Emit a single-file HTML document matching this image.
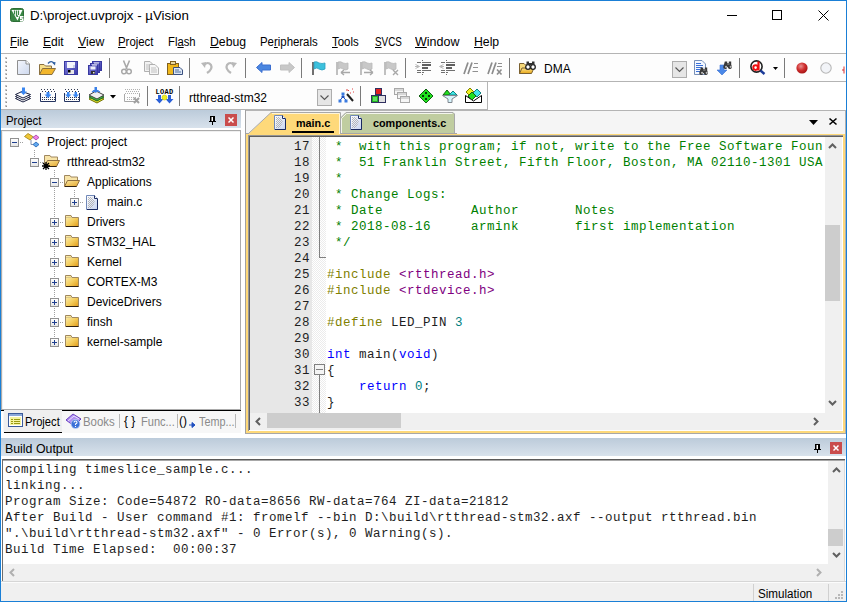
<!DOCTYPE html><html><head><meta charset="utf-8"><style>
*{margin:0;padding:0;box-sizing:border-box}
html,body{width:847px;height:602px;overflow:hidden;background:#fff}
body{position:relative;font-family:"Liberation Sans",sans-serif;font-size:12px;color:#000}
.ui{position:absolute;white-space:pre;font-family:"Liberation Sans",sans-serif;font-size:12px;line-height:14px;color:#000}
.mono{position:absolute;white-space:pre;font-family:"Liberation Mono",monospace;font-size:12.5px;letter-spacing:0.5px;line-height:16px;color:#1e1e1e}
u{text-decoration:underline;text-decoration-thickness:1px;text-underline-offset:1px}
svg{overflow:visible}
</style></head><body><svg style="position:absolute;left:10px;top:8px" width="14" height="14" viewBox="0 0 14 14"><rect x="0.5" y="0.5" width="13" height="13" rx="2" fill="#3a8745" stroke="#2c6e36"/><path d="M1.5 2H12.5L7.5 12.5Z" fill="#fff"/><path d="M4.5 2.5V6.5M6.5 2.5V8M8.5 2.5V7" stroke="#3a8745" stroke-width="1.2"/><path d="M6 9L7.5 7L8.5 9" fill="#3a8745"/><path d="M10 8h3.5v1.5h-2v0.8h2V13.5h-3.5v-1.5h2v-0.7h-2z" fill="#fff"/></svg>
<div class="ui" style="left:30px;top:8px;font-size:13.3px;line-height:16px">D:\project.uvprojx - µVision</div>
<div style="position:absolute;left:727px;top:15px;width:10px;height:1px;background:#000"></div>
<div style="position:absolute;left:772px;top:10px;width:10px;height:10px;border:1px solid #000"></div>
<svg style="position:absolute;left:818px;top:10px" width="11" height="11" viewBox="0 0 11 11"><path d="M0.5 0.5L10.5 10.5M10.5 0.5L0.5 10.5" stroke="#000" stroke-width="1"/></svg>
<div class="ui" style="left:10px;top:35px;font-size:12px;transform:scaleX(0.96);transform-origin:0 0"><u>F</u>ile</div>
<div class="ui" style="left:43px;top:35px;font-size:12px;transform:scaleX(1.0);transform-origin:0 0"><u>E</u>dit</div>
<div class="ui" style="left:78px;top:35px;font-size:12px;transform:scaleX(1.02);transform-origin:0 0"><u>V</u>iew</div>
<div class="ui" style="left:118px;top:35px;font-size:12px;transform:scaleX(0.95);transform-origin:0 0"><u>P</u>roject</div>
<div class="ui" style="left:168px;top:35px;font-size:12px;transform:scaleX(0.94);transform-origin:0 0">Fl<u>a</u>sh</div>
<div class="ui" style="left:210px;top:35px;font-size:12px;transform:scaleX(1.02);transform-origin:0 0"><u>D</u>ebug</div>
<div class="ui" style="left:260px;top:35px;font-size:12px;transform:scaleX(0.95);transform-origin:0 0">Pe<u>r</u>ipherals</div>
<div class="ui" style="left:332px;top:35px;font-size:12px;transform:scaleX(0.95);transform-origin:0 0"><u>T</u>ools</div>
<div class="ui" style="left:375px;top:35px;font-size:12px;transform:scaleX(0.82);transform-origin:0 0"><u>S</u>VCS</div>
<div class="ui" style="left:415px;top:35px;font-size:12px;transform:scaleX(1.04);transform-origin:0 0"><u>W</u>indow</div>
<div class="ui" style="left:474px;top:35px;font-size:12px;transform:scaleX(1.02);transform-origin:0 0"><u>H</u>elp</div>
<div style="position:absolute;left:1px;top:53px;width:845px;height:1px;background:#b4b4b4"></div>
<div style="position:absolute;left:1px;top:54px;width:845px;height:27px;background:#fdfdfd"></div>
<div style="position:absolute;left:1px;top:81px;width:845px;height:1px;background:#b4b4b4"></div>
<div style="position:absolute;left:5px;top:57px;width:2px;height:2px;background:#c4c4c4"></div>
<div style="position:absolute;left:6px;top:58px;width:1px;height:1px;background:#909090"></div>
<div style="position:absolute;left:5px;top:61px;width:2px;height:2px;background:#c4c4c4"></div>
<div style="position:absolute;left:6px;top:62px;width:1px;height:1px;background:#909090"></div>
<div style="position:absolute;left:5px;top:65px;width:2px;height:2px;background:#c4c4c4"></div>
<div style="position:absolute;left:6px;top:66px;width:1px;height:1px;background:#909090"></div>
<div style="position:absolute;left:5px;top:69px;width:2px;height:2px;background:#c4c4c4"></div>
<div style="position:absolute;left:6px;top:70px;width:1px;height:1px;background:#909090"></div>
<div style="position:absolute;left:5px;top:73px;width:2px;height:2px;background:#c4c4c4"></div>
<div style="position:absolute;left:6px;top:74px;width:1px;height:1px;background:#909090"></div>
<div style="position:absolute;left:5px;top:77px;width:2px;height:2px;background:#c4c4c4"></div>
<div style="position:absolute;left:6px;top:78px;width:1px;height:1px;background:#909090"></div>
<div style="position:absolute;left:109px;top:58px;width:1px;height:20px;background:#7a7a7a"></div>
<div style="position:absolute;left:189px;top:58px;width:1px;height:20px;background:#7a7a7a"></div>
<div style="position:absolute;left:245px;top:58px;width:1px;height:20px;background:#7a7a7a"></div>
<div style="position:absolute;left:301px;top:58px;width:1px;height:20px;background:#7a7a7a"></div>
<div style="position:absolute;left:405px;top:58px;width:1px;height:20px;background:#7a7a7a"></div>
<div style="position:absolute;left:509px;top:58px;width:1px;height:20px;background:#7a7a7a"></div>
<div style="position:absolute;left:739px;top:58px;width:1px;height:20px;background:#7a7a7a"></div>
<div style="position:absolute;left:784px;top:58px;width:1px;height:20px;background:#7a7a7a"></div>
<div style="position:absolute;left:1px;top:82px;width:486px;height:27px;background:#fdfdfd"></div>
<div style="position:absolute;left:487px;top:82px;width:1px;height:28px;background:#b4b4b4"></div>
<div style="position:absolute;left:1px;top:109px;width:487px;height:1px;background:#b4b4b4"></div>
<div style="position:absolute;left:5px;top:85px;width:2px;height:2px;background:#c4c4c4"></div>
<div style="position:absolute;left:6px;top:86px;width:1px;height:1px;background:#909090"></div>
<div style="position:absolute;left:5px;top:89px;width:2px;height:2px;background:#c4c4c4"></div>
<div style="position:absolute;left:6px;top:90px;width:1px;height:1px;background:#909090"></div>
<div style="position:absolute;left:5px;top:93px;width:2px;height:2px;background:#c4c4c4"></div>
<div style="position:absolute;left:6px;top:94px;width:1px;height:1px;background:#909090"></div>
<div style="position:absolute;left:5px;top:97px;width:2px;height:2px;background:#c4c4c4"></div>
<div style="position:absolute;left:6px;top:98px;width:1px;height:1px;background:#909090"></div>
<div style="position:absolute;left:5px;top:101px;width:2px;height:2px;background:#c4c4c4"></div>
<div style="position:absolute;left:6px;top:102px;width:1px;height:1px;background:#909090"></div>
<div style="position:absolute;left:5px;top:105px;width:2px;height:2px;background:#c4c4c4"></div>
<div style="position:absolute;left:6px;top:106px;width:1px;height:1px;background:#909090"></div>
<div style="position:absolute;left:147px;top:86px;width:1px;height:20px;background:#7a7a7a"></div>
<div style="position:absolute;left:179px;top:86px;width:1px;height:20px;background:#7a7a7a"></div>
<div style="position:absolute;left:360px;top:86px;width:1px;height:20px;background:#7a7a7a"></div>
<div class="ui" style="left:189px;top:91px;">rtthread-stm32</div>
<div style="position:absolute;left:672px;top:61px;width:15px;height:17px;background:#e6e6e6;border:1px solid #adadad"></div>
<svg style="position:absolute;left:675px;top:67px" width="9" height="5" viewBox="0 0 9 5"><path d="M0.5 0.5L4.5 4.5L8.5 0.5" stroke="#555" fill="none" stroke-width="1.1"/></svg>
<div style="position:absolute;left:317px;top:89px;width:15px;height:17px;background:#e6e6e6;border:1px solid #adadad"></div>
<svg style="position:absolute;left:320px;top:95px" width="9" height="5" viewBox="0 0 9 5"><path d="M0.5 0.5L4.5 4.5L8.5 0.5" stroke="#555" fill="none" stroke-width="1.1"/></svg>
<div class="ui" style="left:544px;top:62px;font-size:12px">DMA</div>
<div style="position:absolute;left:1px;top:109px;width:240px;height:1px;background:#b4b4b4"></div>
<div style="position:absolute;left:1px;top:110px;width:240px;height:18px;background:linear-gradient(#bccbda,#d8e2ec)"></div>
<div class="ui" style="left:6px;top:114px;transform:scaleX(0.95);transform-origin:0 0">Project</div>
<svg style="position:absolute;left:209px;top:116px" width="8" height="10" viewBox="0 0 8 10"><path d="M1 0h5v5h1v1H0V5h1z" fill="#000"/><rect x="2.5" y="1" width="1.5" height="4" fill="#fff"/><rect x="3" y="6" width="1" height="3" fill="#000"/></svg>
<div style="position:absolute;left:225px;top:114px;width:12px;height:12px;background:#c94c4c"></div>
<svg style="position:absolute;left:228px;top:117px" width="6" height="6" viewBox="0 0 6 6"><path d="M0.5 0.5L5.5 5.5M5.5 0.5L0.5 5.5" stroke="#fff" stroke-width="1.5"/></svg>
<div style="position:absolute;left:1px;top:130px;width:240px;height:280px;border:1px solid #ababab;background:#fff"></div>
<div style="position:absolute;left:2px;top:131px;width:238px;height:278px;border:1px solid #f0f0f0;border-right:none;border-bottom:none"></div>
<div style="position:absolute;left:34px;top:150px;width:1px;height:1px;background:#a0a0a0"></div>
<div style="position:absolute;left:34px;top:152px;width:1px;height:1px;background:#a0a0a0"></div>
<div style="position:absolute;left:34px;top:154px;width:1px;height:1px;background:#a0a0a0"></div>
<div style="position:absolute;left:34px;top:156px;width:1px;height:1px;background:#a0a0a0"></div>
<div style="position:absolute;left:54px;top:170px;width:1px;height:1px;background:#a0a0a0"></div>
<div style="position:absolute;left:54px;top:172px;width:1px;height:1px;background:#a0a0a0"></div>
<div style="position:absolute;left:54px;top:174px;width:1px;height:1px;background:#a0a0a0"></div>
<div style="position:absolute;left:54px;top:176px;width:1px;height:1px;background:#a0a0a0"></div>
<div style="position:absolute;left:54px;top:178px;width:1px;height:1px;background:#a0a0a0"></div>
<div style="position:absolute;left:54px;top:180px;width:1px;height:1px;background:#a0a0a0"></div>
<div style="position:absolute;left:54px;top:182px;width:1px;height:1px;background:#a0a0a0"></div>
<div style="position:absolute;left:54px;top:184px;width:1px;height:1px;background:#a0a0a0"></div>
<div style="position:absolute;left:54px;top:186px;width:1px;height:1px;background:#a0a0a0"></div>
<div style="position:absolute;left:54px;top:188px;width:1px;height:1px;background:#a0a0a0"></div>
<div style="position:absolute;left:54px;top:190px;width:1px;height:1px;background:#a0a0a0"></div>
<div style="position:absolute;left:54px;top:192px;width:1px;height:1px;background:#a0a0a0"></div>
<div style="position:absolute;left:54px;top:194px;width:1px;height:1px;background:#a0a0a0"></div>
<div style="position:absolute;left:54px;top:196px;width:1px;height:1px;background:#a0a0a0"></div>
<div style="position:absolute;left:54px;top:198px;width:1px;height:1px;background:#a0a0a0"></div>
<div style="position:absolute;left:54px;top:200px;width:1px;height:1px;background:#a0a0a0"></div>
<div style="position:absolute;left:54px;top:202px;width:1px;height:1px;background:#a0a0a0"></div>
<div style="position:absolute;left:54px;top:204px;width:1px;height:1px;background:#a0a0a0"></div>
<div style="position:absolute;left:54px;top:206px;width:1px;height:1px;background:#a0a0a0"></div>
<div style="position:absolute;left:54px;top:208px;width:1px;height:1px;background:#a0a0a0"></div>
<div style="position:absolute;left:54px;top:210px;width:1px;height:1px;background:#a0a0a0"></div>
<div style="position:absolute;left:54px;top:212px;width:1px;height:1px;background:#a0a0a0"></div>
<div style="position:absolute;left:54px;top:214px;width:1px;height:1px;background:#a0a0a0"></div>
<div style="position:absolute;left:54px;top:216px;width:1px;height:1px;background:#a0a0a0"></div>
<div style="position:absolute;left:54px;top:218px;width:1px;height:1px;background:#a0a0a0"></div>
<div style="position:absolute;left:54px;top:220px;width:1px;height:1px;background:#a0a0a0"></div>
<div style="position:absolute;left:54px;top:222px;width:1px;height:1px;background:#a0a0a0"></div>
<div style="position:absolute;left:54px;top:224px;width:1px;height:1px;background:#a0a0a0"></div>
<div style="position:absolute;left:54px;top:226px;width:1px;height:1px;background:#a0a0a0"></div>
<div style="position:absolute;left:54px;top:228px;width:1px;height:1px;background:#a0a0a0"></div>
<div style="position:absolute;left:54px;top:230px;width:1px;height:1px;background:#a0a0a0"></div>
<div style="position:absolute;left:54px;top:232px;width:1px;height:1px;background:#a0a0a0"></div>
<div style="position:absolute;left:54px;top:234px;width:1px;height:1px;background:#a0a0a0"></div>
<div style="position:absolute;left:54px;top:236px;width:1px;height:1px;background:#a0a0a0"></div>
<div style="position:absolute;left:54px;top:238px;width:1px;height:1px;background:#a0a0a0"></div>
<div style="position:absolute;left:54px;top:240px;width:1px;height:1px;background:#a0a0a0"></div>
<div style="position:absolute;left:54px;top:242px;width:1px;height:1px;background:#a0a0a0"></div>
<div style="position:absolute;left:54px;top:244px;width:1px;height:1px;background:#a0a0a0"></div>
<div style="position:absolute;left:54px;top:246px;width:1px;height:1px;background:#a0a0a0"></div>
<div style="position:absolute;left:54px;top:248px;width:1px;height:1px;background:#a0a0a0"></div>
<div style="position:absolute;left:54px;top:250px;width:1px;height:1px;background:#a0a0a0"></div>
<div style="position:absolute;left:54px;top:252px;width:1px;height:1px;background:#a0a0a0"></div>
<div style="position:absolute;left:54px;top:254px;width:1px;height:1px;background:#a0a0a0"></div>
<div style="position:absolute;left:54px;top:256px;width:1px;height:1px;background:#a0a0a0"></div>
<div style="position:absolute;left:54px;top:258px;width:1px;height:1px;background:#a0a0a0"></div>
<div style="position:absolute;left:54px;top:260px;width:1px;height:1px;background:#a0a0a0"></div>
<div style="position:absolute;left:54px;top:262px;width:1px;height:1px;background:#a0a0a0"></div>
<div style="position:absolute;left:54px;top:264px;width:1px;height:1px;background:#a0a0a0"></div>
<div style="position:absolute;left:54px;top:266px;width:1px;height:1px;background:#a0a0a0"></div>
<div style="position:absolute;left:54px;top:268px;width:1px;height:1px;background:#a0a0a0"></div>
<div style="position:absolute;left:54px;top:270px;width:1px;height:1px;background:#a0a0a0"></div>
<div style="position:absolute;left:54px;top:272px;width:1px;height:1px;background:#a0a0a0"></div>
<div style="position:absolute;left:54px;top:274px;width:1px;height:1px;background:#a0a0a0"></div>
<div style="position:absolute;left:54px;top:276px;width:1px;height:1px;background:#a0a0a0"></div>
<div style="position:absolute;left:54px;top:278px;width:1px;height:1px;background:#a0a0a0"></div>
<div style="position:absolute;left:54px;top:280px;width:1px;height:1px;background:#a0a0a0"></div>
<div style="position:absolute;left:54px;top:282px;width:1px;height:1px;background:#a0a0a0"></div>
<div style="position:absolute;left:54px;top:284px;width:1px;height:1px;background:#a0a0a0"></div>
<div style="position:absolute;left:54px;top:286px;width:1px;height:1px;background:#a0a0a0"></div>
<div style="position:absolute;left:54px;top:288px;width:1px;height:1px;background:#a0a0a0"></div>
<div style="position:absolute;left:54px;top:290px;width:1px;height:1px;background:#a0a0a0"></div>
<div style="position:absolute;left:54px;top:292px;width:1px;height:1px;background:#a0a0a0"></div>
<div style="position:absolute;left:54px;top:294px;width:1px;height:1px;background:#a0a0a0"></div>
<div style="position:absolute;left:54px;top:296px;width:1px;height:1px;background:#a0a0a0"></div>
<div style="position:absolute;left:54px;top:298px;width:1px;height:1px;background:#a0a0a0"></div>
<div style="position:absolute;left:54px;top:300px;width:1px;height:1px;background:#a0a0a0"></div>
<div style="position:absolute;left:54px;top:302px;width:1px;height:1px;background:#a0a0a0"></div>
<div style="position:absolute;left:54px;top:304px;width:1px;height:1px;background:#a0a0a0"></div>
<div style="position:absolute;left:54px;top:306px;width:1px;height:1px;background:#a0a0a0"></div>
<div style="position:absolute;left:54px;top:308px;width:1px;height:1px;background:#a0a0a0"></div>
<div style="position:absolute;left:54px;top:310px;width:1px;height:1px;background:#a0a0a0"></div>
<div style="position:absolute;left:54px;top:312px;width:1px;height:1px;background:#a0a0a0"></div>
<div style="position:absolute;left:54px;top:314px;width:1px;height:1px;background:#a0a0a0"></div>
<div style="position:absolute;left:54px;top:316px;width:1px;height:1px;background:#a0a0a0"></div>
<div style="position:absolute;left:54px;top:318px;width:1px;height:1px;background:#a0a0a0"></div>
<div style="position:absolute;left:54px;top:320px;width:1px;height:1px;background:#a0a0a0"></div>
<div style="position:absolute;left:54px;top:322px;width:1px;height:1px;background:#a0a0a0"></div>
<div style="position:absolute;left:54px;top:324px;width:1px;height:1px;background:#a0a0a0"></div>
<div style="position:absolute;left:54px;top:326px;width:1px;height:1px;background:#a0a0a0"></div>
<div style="position:absolute;left:54px;top:328px;width:1px;height:1px;background:#a0a0a0"></div>
<div style="position:absolute;left:54px;top:330px;width:1px;height:1px;background:#a0a0a0"></div>
<div style="position:absolute;left:54px;top:332px;width:1px;height:1px;background:#a0a0a0"></div>
<div style="position:absolute;left:54px;top:334px;width:1px;height:1px;background:#a0a0a0"></div>
<div style="position:absolute;left:54px;top:336px;width:1px;height:1px;background:#a0a0a0"></div>
<div style="position:absolute;left:54px;top:338px;width:1px;height:1px;background:#a0a0a0"></div>
<div style="position:absolute;left:54px;top:340px;width:1px;height:1px;background:#a0a0a0"></div>
<div style="position:absolute;left:54px;top:342px;width:1px;height:1px;background:#a0a0a0"></div>
<div style="position:absolute;left:54px;top:344px;width:1px;height:1px;background:#a0a0a0"></div>
<div style="position:absolute;left:74px;top:190px;width:1px;height:1px;background:#a0a0a0"></div>
<div style="position:absolute;left:74px;top:192px;width:1px;height:1px;background:#a0a0a0"></div>
<div style="position:absolute;left:74px;top:194px;width:1px;height:1px;background:#a0a0a0"></div>
<div style="position:absolute;left:74px;top:196px;width:1px;height:1px;background:#a0a0a0"></div>
<div style="position:absolute;left:10px;top:138px;width:9px;height:9px;border:1px solid #919191;background:linear-gradient(#fff,#e6e6e6)"></div>
<div style="position:absolute;left:12px;top:142px;width:5px;height:1px;background:#1f3f8f"></div>
<div style="position:absolute;left:20px;top:142px;width:1px;height:1px;background:#a0a0a0"></div>
<div style="position:absolute;left:22px;top:142px;width:1px;height:1px;background:#a0a0a0"></div>
<svg style="position:absolute;left:24px;top:133px" width="16" height="16" viewBox="0 0 16 16"><path d="M0.5 3.5L4 0.5L9.5 4L6 7Z" fill="#f0c838" stroke="#a08010" stroke-width="0.8"/><path d="M9 4.5L12 2L15 4.5L12 7Z" fill="#f080e8" stroke="#a040a0" stroke-width="0.8"/><path d="M9 11.5L12 9L15 11.5L12 14Z" fill="#60a8f0" stroke="#2060b0" stroke-width="0.8"/><path d="M7 7V11.5H9M9 4.5H8" stroke="#8090b0" fill="none"/></svg>
<div class="ui" style="left:47px;top:135px;">Project: project</div>
<div style="position:absolute;left:30px;top:158px;width:9px;height:9px;border:1px solid #919191;background:linear-gradient(#fff,#e6e6e6)"></div>
<div style="position:absolute;left:32px;top:162px;width:5px;height:1px;background:#1f3f8f"></div>
<div style="position:absolute;left:40px;top:162px;width:1px;height:1px;background:#a0a0a0"></div>
<div style="position:absolute;left:42px;top:162px;width:1px;height:1px;background:#a0a0a0"></div>
<svg style="position:absolute;left:44px;top:154px" width="16" height="14" viewBox="0 0 16 14"><defs><linearGradient id="og" x1="0" y1="0" x2="1" y2="1"><stop offset="0" stop-color="#fbe8a0"/><stop offset="1" stop-color="#e3a52a"/></linearGradient></defs><path d="M0.5 12.5V1.5H6L7 3H13.5V6" fill="#f8e4a8" stroke="#a08860"/><path d="M3.5 6.5H15.5L12.5 12.5H0.5Z" fill="url(#og)" stroke="#907040"/><path d="M1 12.5H12.5" stroke="#302010"/></svg>
<svg style="position:absolute;left:42px;top:162px" width="8" height="8" viewBox="0 0 8 8"><path d="M4 0v8M0 4h8M1 1l6 6M7 1l-6 6" stroke="#000" stroke-width="1.3"/></svg>
<div class="ui" style="left:67px;top:155px;">rtthread-stm32</div>
<div style="position:absolute;left:50px;top:178px;width:9px;height:9px;border:1px solid #919191;background:linear-gradient(#fff,#e6e6e6)"></div>
<div style="position:absolute;left:52px;top:182px;width:5px;height:1px;background:#1f3f8f"></div>
<div style="position:absolute;left:60px;top:182px;width:1px;height:1px;background:#a0a0a0"></div>
<div style="position:absolute;left:62px;top:182px;width:1px;height:1px;background:#a0a0a0"></div>
<svg style="position:absolute;left:64px;top:174px" width="16" height="14" viewBox="0 0 16 14"><defs><linearGradient id="og" x1="0" y1="0" x2="1" y2="1"><stop offset="0" stop-color="#fbe8a0"/><stop offset="1" stop-color="#e3a52a"/></linearGradient></defs><path d="M0.5 12.5V1.5H6L7 3H13.5V6" fill="#f8e4a8" stroke="#a08860"/><path d="M3.5 6.5H15.5L12.5 12.5H0.5Z" fill="url(#og)" stroke="#907040"/><path d="M1 12.5H12.5" stroke="#302010"/></svg>
<div class="ui" style="left:87px;top:175px;">Applications</div>
<div style="position:absolute;left:70px;top:198px;width:9px;height:9px;border:1px solid #919191;background:linear-gradient(#fff,#e6e6e6)"></div>
<div style="position:absolute;left:72px;top:202px;width:5px;height:1px;background:#1f3f8f"></div>
<div style="position:absolute;left:74px;top:200px;width:1px;height:5px;background:#1f3f8f"></div>
<div style="position:absolute;left:80px;top:202px;width:1px;height:1px;background:#a0a0a0"></div>
<div style="position:absolute;left:82px;top:202px;width:1px;height:1px;background:#a0a0a0"></div>
<svg style="position:absolute;left:86px;top:195px" width="12" height="15" viewBox="0 0 12 15"><defs><linearGradient id="di" x1="0" y1="0" x2="1" y2="1"><stop offset="0" stop-color="#ffffff"/><stop offset="1" stop-color="#c8d4f0"/></linearGradient><pattern id="dp" width="2" height="2" patternUnits="userSpaceOnUse"><rect width="1" height="1" fill="#a8a8a8"/><rect x="1" y="1" width="1" height="1" fill="#a8a8a8"/></pattern></defs><path d="M0.5 0.5H8.5L11.5 3.5V14.5H0.5Z" fill="url(#di)" stroke="#7088b8"/><path d="M2 2H6L9 7L6 13H2Z" fill="url(#dp)" opacity="0.8"/><path d="M8.5 0.5V3.5H11.5" fill="#fff" stroke="#1a2a60"/><path d="M1 14.5H11.5V4" fill="none" stroke="#1a2a60"/></svg>
<div class="ui" style="left:107px;top:195px;">main.c</div>
<div style="position:absolute;left:50px;top:218px;width:9px;height:9px;border:1px solid #919191;background:linear-gradient(#fff,#e6e6e6)"></div>
<div style="position:absolute;left:52px;top:222px;width:5px;height:1px;background:#1f3f8f"></div>
<div style="position:absolute;left:54px;top:220px;width:1px;height:5px;background:#1f3f8f"></div>
<div style="position:absolute;left:60px;top:222px;width:1px;height:1px;background:#a0a0a0"></div>
<div style="position:absolute;left:62px;top:222px;width:1px;height:1px;background:#a0a0a0"></div>
<svg style="position:absolute;left:65px;top:215px" width="14" height="12" viewBox="0 0 14 12"><defs><linearGradient id="fg" x1="0" y1="0" x2="1" y2="1"><stop offset="0" stop-color="#fdf2b8"/><stop offset="0.55" stop-color="#f3cc5c"/><stop offset="1" stop-color="#e09a18"/></linearGradient></defs><path d="M0.5 11.5V0.5H6L7 2.5H13.5V11.5Z" fill="url(#fg)" stroke="#a08860"/><path d="M1 2.5H7" stroke="#d8c890"/><path d="M1 11.5H13.5" stroke="#302010"/></svg>
<div class="ui" style="left:87px;top:215px;">Drivers</div>
<div style="position:absolute;left:50px;top:238px;width:9px;height:9px;border:1px solid #919191;background:linear-gradient(#fff,#e6e6e6)"></div>
<div style="position:absolute;left:52px;top:242px;width:5px;height:1px;background:#1f3f8f"></div>
<div style="position:absolute;left:54px;top:240px;width:1px;height:5px;background:#1f3f8f"></div>
<div style="position:absolute;left:60px;top:242px;width:1px;height:1px;background:#a0a0a0"></div>
<div style="position:absolute;left:62px;top:242px;width:1px;height:1px;background:#a0a0a0"></div>
<svg style="position:absolute;left:65px;top:235px" width="14" height="12" viewBox="0 0 14 12"><defs><linearGradient id="fg" x1="0" y1="0" x2="1" y2="1"><stop offset="0" stop-color="#fdf2b8"/><stop offset="0.55" stop-color="#f3cc5c"/><stop offset="1" stop-color="#e09a18"/></linearGradient></defs><path d="M0.5 11.5V0.5H6L7 2.5H13.5V11.5Z" fill="url(#fg)" stroke="#a08860"/><path d="M1 2.5H7" stroke="#d8c890"/><path d="M1 11.5H13.5" stroke="#302010"/></svg>
<div class="ui" style="left:87px;top:235px;">STM32_HAL</div>
<div style="position:absolute;left:50px;top:258px;width:9px;height:9px;border:1px solid #919191;background:linear-gradient(#fff,#e6e6e6)"></div>
<div style="position:absolute;left:52px;top:262px;width:5px;height:1px;background:#1f3f8f"></div>
<div style="position:absolute;left:54px;top:260px;width:1px;height:5px;background:#1f3f8f"></div>
<div style="position:absolute;left:60px;top:262px;width:1px;height:1px;background:#a0a0a0"></div>
<div style="position:absolute;left:62px;top:262px;width:1px;height:1px;background:#a0a0a0"></div>
<svg style="position:absolute;left:65px;top:255px" width="14" height="12" viewBox="0 0 14 12"><defs><linearGradient id="fg" x1="0" y1="0" x2="1" y2="1"><stop offset="0" stop-color="#fdf2b8"/><stop offset="0.55" stop-color="#f3cc5c"/><stop offset="1" stop-color="#e09a18"/></linearGradient></defs><path d="M0.5 11.5V0.5H6L7 2.5H13.5V11.5Z" fill="url(#fg)" stroke="#a08860"/><path d="M1 2.5H7" stroke="#d8c890"/><path d="M1 11.5H13.5" stroke="#302010"/></svg>
<div class="ui" style="left:87px;top:255px;">Kernel</div>
<div style="position:absolute;left:50px;top:278px;width:9px;height:9px;border:1px solid #919191;background:linear-gradient(#fff,#e6e6e6)"></div>
<div style="position:absolute;left:52px;top:282px;width:5px;height:1px;background:#1f3f8f"></div>
<div style="position:absolute;left:54px;top:280px;width:1px;height:5px;background:#1f3f8f"></div>
<div style="position:absolute;left:60px;top:282px;width:1px;height:1px;background:#a0a0a0"></div>
<div style="position:absolute;left:62px;top:282px;width:1px;height:1px;background:#a0a0a0"></div>
<svg style="position:absolute;left:65px;top:275px" width="14" height="12" viewBox="0 0 14 12"><defs><linearGradient id="fg" x1="0" y1="0" x2="1" y2="1"><stop offset="0" stop-color="#fdf2b8"/><stop offset="0.55" stop-color="#f3cc5c"/><stop offset="1" stop-color="#e09a18"/></linearGradient></defs><path d="M0.5 11.5V0.5H6L7 2.5H13.5V11.5Z" fill="url(#fg)" stroke="#a08860"/><path d="M1 2.5H7" stroke="#d8c890"/><path d="M1 11.5H13.5" stroke="#302010"/></svg>
<div class="ui" style="left:87px;top:275px;">CORTEX-M3</div>
<div style="position:absolute;left:50px;top:298px;width:9px;height:9px;border:1px solid #919191;background:linear-gradient(#fff,#e6e6e6)"></div>
<div style="position:absolute;left:52px;top:302px;width:5px;height:1px;background:#1f3f8f"></div>
<div style="position:absolute;left:54px;top:300px;width:1px;height:5px;background:#1f3f8f"></div>
<div style="position:absolute;left:60px;top:302px;width:1px;height:1px;background:#a0a0a0"></div>
<div style="position:absolute;left:62px;top:302px;width:1px;height:1px;background:#a0a0a0"></div>
<svg style="position:absolute;left:65px;top:295px" width="14" height="12" viewBox="0 0 14 12"><defs><linearGradient id="fg" x1="0" y1="0" x2="1" y2="1"><stop offset="0" stop-color="#fdf2b8"/><stop offset="0.55" stop-color="#f3cc5c"/><stop offset="1" stop-color="#e09a18"/></linearGradient></defs><path d="M0.5 11.5V0.5H6L7 2.5H13.5V11.5Z" fill="url(#fg)" stroke="#a08860"/><path d="M1 2.5H7" stroke="#d8c890"/><path d="M1 11.5H13.5" stroke="#302010"/></svg>
<div class="ui" style="left:87px;top:295px;">DeviceDrivers</div>
<div style="position:absolute;left:50px;top:318px;width:9px;height:9px;border:1px solid #919191;background:linear-gradient(#fff,#e6e6e6)"></div>
<div style="position:absolute;left:52px;top:322px;width:5px;height:1px;background:#1f3f8f"></div>
<div style="position:absolute;left:54px;top:320px;width:1px;height:5px;background:#1f3f8f"></div>
<div style="position:absolute;left:60px;top:322px;width:1px;height:1px;background:#a0a0a0"></div>
<div style="position:absolute;left:62px;top:322px;width:1px;height:1px;background:#a0a0a0"></div>
<svg style="position:absolute;left:65px;top:315px" width="14" height="12" viewBox="0 0 14 12"><defs><linearGradient id="fg" x1="0" y1="0" x2="1" y2="1"><stop offset="0" stop-color="#fdf2b8"/><stop offset="0.55" stop-color="#f3cc5c"/><stop offset="1" stop-color="#e09a18"/></linearGradient></defs><path d="M0.5 11.5V0.5H6L7 2.5H13.5V11.5Z" fill="url(#fg)" stroke="#a08860"/><path d="M1 2.5H7" stroke="#d8c890"/><path d="M1 11.5H13.5" stroke="#302010"/></svg>
<div class="ui" style="left:87px;top:315px;">finsh</div>
<div style="position:absolute;left:50px;top:338px;width:9px;height:9px;border:1px solid #919191;background:linear-gradient(#fff,#e6e6e6)"></div>
<div style="position:absolute;left:52px;top:342px;width:5px;height:1px;background:#1f3f8f"></div>
<div style="position:absolute;left:54px;top:340px;width:1px;height:5px;background:#1f3f8f"></div>
<div style="position:absolute;left:60px;top:342px;width:1px;height:1px;background:#a0a0a0"></div>
<div style="position:absolute;left:62px;top:342px;width:1px;height:1px;background:#a0a0a0"></div>
<svg style="position:absolute;left:65px;top:335px" width="14" height="12" viewBox="0 0 14 12"><defs><linearGradient id="fg" x1="0" y1="0" x2="1" y2="1"><stop offset="0" stop-color="#fdf2b8"/><stop offset="0.55" stop-color="#f3cc5c"/><stop offset="1" stop-color="#e09a18"/></linearGradient></defs><path d="M0.5 11.5V0.5H6L7 2.5H13.5V11.5Z" fill="url(#fg)" stroke="#a08860"/><path d="M1 2.5H7" stroke="#d8c890"/><path d="M1 11.5H13.5" stroke="#302010"/></svg>
<div class="ui" style="left:87px;top:335px;">kernel-sample</div>
<div style="position:absolute;left:3px;top:411px;width:238px;height:22px;background:#f7f7f7"></div>
<div style="position:absolute;left:1px;top:410px;width:3px;height:1px;background:#000"></div>
<div style="position:absolute;left:62px;top:410px;width:179px;height:1px;background:#000"></div>
<div style="position:absolute;left:4px;top:410px;width:58px;height:22px;background:#efefef"></div>
<div style="position:absolute;left:4px;top:432px;width:58px;height:1px;background:#000"></div>
<svg style="position:absolute;left:8px;top:413px" width="15" height="14" viewBox="0 0 15 14"><rect x="0.5" y="0.5" width="14" height="13" fill="#fff" stroke="#3a5a9a"/><rect x="1" y="1" width="13" height="2" fill="#8aa8d8"/><rect x="2" y="4" width="11" height="8" fill="#f4f4a0"/><path d="M3 6h2v1H3zM3 8h2v1H3zM3 10h2v1H3zM6 6h6v1H6zM6 8h6v1H6zM6 10h6v1H6z" fill="#9a9a10"/></svg>
<div class="ui" style="left:25px;top:415px;transform:scaleX(0.93);transform-origin:0 0">Project</div>
<svg style="position:absolute;left:65px;top:413px" width="17" height="16" viewBox="0 0 17 16"><path d="M1 7L8 1L16 6L9 13Z" fill="#b090f0" stroke="#6a40c0"/><path d="M3 8L9 3L14 6" fill="none" stroke="#e8e0ff"/><circle cx="10.5" cy="11" r="4.5" fill="#3a70d8" stroke="#c8d8f8" stroke-width="0.8"/><path d="M9 9.5Q9 8 10.5 8Q12 8 12 9.5Q12 10.5 10.5 11V12M10.5 13V14" stroke="#fff" stroke-width="1.1" fill="none"/></svg>
<div class="ui" style="left:83px;top:415px;color:#8a8a8a;transform:scaleX(0.95);transform-origin:0 0">Books</div>
<div style="position:absolute;left:119px;top:414px;width:1px;height:14px;background:#b8b8b8"></div>
<div class="ui" style="left:124px;top:414px;font-family:"Liberation Mono";font-weight:bold;font-size:12px;letter-spacing:-2.5px">{ }</div>
<div class="ui" style="left:141px;top:415px;color:#8a8a8a;transform:scaleX(0.92);transform-origin:0 0">Func...</div>
<div style="position:absolute;left:177px;top:414px;width:1px;height:14px;background:#b8b8b8"></div>
<div class="ui" style="left:179px;top:414px;font-family:"Liberation Mono";font-weight:bold;font-size:12px;letter-spacing:-3px">()</div>
<svg style="position:absolute;left:189px;top:422px" width="8" height="6" viewBox="0 0 8 6"><path d="M0 3h5M3 0.5l3 2.5-3 2.5z" stroke="#2050c0" fill="#2050c0"/></svg>
<div class="ui" style="left:199px;top:415px;color:#8a8a8a;transform:scaleX(0.9);transform-origin:0 0">Temp...</div>
<div style="position:absolute;left:235px;top:414px;width:1px;height:14px;background:#b8b8b8"></div>
<div style="position:absolute;left:245px;top:110px;width:601px;height:1px;background:#b4b4b4"></div>
<div style="position:absolute;left:245px;top:110px;width:1px;height:324px;background:#a0a0a0"></div>
<div style="position:absolute;left:246px;top:111px;width:600px;height:23px;background:#f5f5f5"></div>
<svg style="position:absolute;left:246px;top:112px" width="96" height="23" viewBox="0 0 96 23"><path d="M2.5 22L25 0.5H94V22Z" fill="#fed97a"/><path d="M2.5 21.5L25 0.5H94.5V22" fill="none" stroke="#a8a8a8"/><path d="M26 1.5H93.5V22" fill="none" stroke="#fff" stroke-opacity="0.7"/><path d="M0 21.5H3" stroke="#a8a8a8"/></svg>
<svg style="position:absolute;left:274px;top:115px" width="12" height="15" viewBox="0 0 12 15"><defs><linearGradient id="di" x1="0" y1="0" x2="1" y2="1"><stop offset="0" stop-color="#ffffff"/><stop offset="1" stop-color="#c8d4f0"/></linearGradient><pattern id="dp" width="2" height="2" patternUnits="userSpaceOnUse"><rect width="1" height="1" fill="#a8a8a8"/><rect x="1" y="1" width="1" height="1" fill="#a8a8a8"/></pattern></defs><path d="M0.5 0.5H8.5L11.5 3.5V14.5H0.5Z" fill="url(#di)" stroke="#7088b8"/><path d="M2 2H6L9 7L6 13H2Z" fill="url(#dp)" opacity="0.8"/><path d="M8.5 0.5V3.5H11.5" fill="#fff" stroke="#1a2a60"/><path d="M1 14.5H11.5V4" fill="none" stroke="#1a2a60"/></svg>
<div class="ui" style="left:296px;top:116px;font-weight:bold;font-size:10.8px">main.c</div>
<div style="position:absolute;left:292px;top:131px;width:42px;height:2px;background:#000"></div>
<svg style="position:absolute;left:340px;top:112px" width="117" height="23" viewBox="0 0 117 23"><path d="M0.5 21.5V6L6 0.5H113L114.5 2V21.5Z" fill="#c0cda0" stroke="#a8a8a8"/><path d="M1.5 21V6.5L6.5 1.5H112.5" fill="none" stroke="#fff" stroke-opacity="0.8"/><path d="M0 21.5H117" stroke="#a8a8a8"/></svg>
<svg style="position:absolute;left:350px;top:115px" width="12" height="15" viewBox="0 0 12 15"><defs><linearGradient id="di" x1="0" y1="0" x2="1" y2="1"><stop offset="0" stop-color="#ffffff"/><stop offset="1" stop-color="#c8d4f0"/></linearGradient><pattern id="dp" width="2" height="2" patternUnits="userSpaceOnUse"><rect width="1" height="1" fill="#a8a8a8"/><rect x="1" y="1" width="1" height="1" fill="#a8a8a8"/></pattern></defs><path d="M0.5 0.5H8.5L11.5 3.5V14.5H0.5Z" fill="url(#di)" stroke="#7088b8"/><path d="M2 2H6L9 7L6 13H2Z" fill="url(#dp)" opacity="0.8"/><path d="M8.5 0.5V3.5H11.5" fill="#fff" stroke="#1a2a60"/><path d="M1 14.5H11.5V4" fill="none" stroke="#1a2a60"/></svg>
<div class="ui" style="left:373px;top:116px;font-weight:bold;font-size:10.8px">components.c</div>
<svg style="position:absolute;left:809px;top:120px" width="9" height="5" viewBox="0 0 9 5"><path d="M0 0h9L4.5 5z" fill="#000"/></svg>
<svg style="position:absolute;left:829px;top:118px" width="8" height="7" viewBox="0 0 8 7"><path d="M0.5 0.5L7.5 6.5M7.5 0.5L0.5 6.5" stroke="#000" stroke-width="1.6"/></svg>
<div style="position:absolute;left:246px;top:134px;width:599px;height:299px;background:#fed97a"></div>
<div style="position:absolute;left:845px;top:111px;width:1px;height:323px;background:#b0b0b0"></div>
<div style="position:absolute;left:245px;top:433px;width:601px;height:1px;background:#a8a8a8"></div>
<div style="position:absolute;left:248px;top:135px;width:595px;height:296px;background:#fff"></div>
<div style="position:absolute;left:248px;top:135px;width:595px;height:1px;background:#959595"></div>
<div style="position:absolute;left:248px;top:135px;width:1px;height:296px;background:#959595"></div>
<div style="position:absolute;left:249px;top:136px;width:594px;height:1px;background:#5e5e5e"></div>
<div style="position:absolute;left:249px;top:136px;width:1px;height:294px;background:#5e5e5e"></div>
<div style="position:absolute;left:250px;top:137px;width:62px;height:276px;background:#e7e7e7"></div>
<div style="position:absolute;left:312px;top:137px;width:14px;height:276px;background-color:#fff;background-image:linear-gradient(45deg,#ececec 25%,transparent 25%,transparent 75%,#ececec 75%),linear-gradient(45deg,#ececec 25%,transparent 25%,transparent 75%,#ececec 75%);background-size:2px 2px;background-position:0 0,1px 1px"></div>
<div style="position:absolute;left:319px;top:137px;width:1px;height:121px;background:#808080"></div>
<div style="position:absolute;left:319px;top:257px;width:7px;height:1px;background:#808080"></div>
<div style="position:absolute;left:314px;top:364px;width:11px;height:11px;border:1px solid #808080;background:#f4f4f4"></div>
<div style="position:absolute;left:316px;top:369px;width:7px;height:1px;background:#808080"></div>
<div style="position:absolute;left:319px;top:375px;width:1px;height:38px;background:#808080"></div>
<div style="position:absolute;left:250px;top:137px;width:573px;height:276px;overflow:hidden">
<div class="mono" style="left:0px;top:2px;width:60px;text-align:right">17</div>
<div class="mono" style="left:77px;top:2px"><span style="color:#008000"> *  with this program; if not, write to the Free Software Foundation, Inc.,</span></div>
<div class="mono" style="left:0px;top:18px;width:60px;text-align:right">18</div>
<div class="mono" style="left:77px;top:18px"><span style="color:#008000"> *  51 Franklin Street, Fifth Floor, Boston, MA 02110-1301 USA.</span></div>
<div class="mono" style="left:0px;top:34px;width:60px;text-align:right">19</div>
<div class="mono" style="left:77px;top:34px"><span style="color:#008000"> *</span></div>
<div class="mono" style="left:0px;top:50px;width:60px;text-align:right">20</div>
<div class="mono" style="left:77px;top:50px"><span style="color:#008000"> * Change Logs:</span></div>
<div class="mono" style="left:0px;top:66px;width:60px;text-align:right">21</div>
<div class="mono" style="left:77px;top:66px"><span style="color:#008000"> * Date           Author       Notes</span></div>
<div class="mono" style="left:0px;top:82px;width:60px;text-align:right">22</div>
<div class="mono" style="left:77px;top:82px"><span style="color:#008000"> * 2018-08-16     armink       first implementation</span></div>
<div class="mono" style="left:0px;top:98px;width:60px;text-align:right">23</div>
<div class="mono" style="left:77px;top:98px"><span style="color:#008000"> */</span></div>
<div class="mono" style="left:0px;top:114px;width:60px;text-align:right">24</div>
<div class="mono" style="left:77px;top:114px"></div>
<div class="mono" style="left:0px;top:130px;width:60px;text-align:right">25</div>
<div class="mono" style="left:77px;top:130px"><span style="color:#808000">#include </span><span style="color:#800080">&lt;rtthread.h&gt;</span></div>
<div class="mono" style="left:0px;top:146px;width:60px;text-align:right">26</div>
<div class="mono" style="left:77px;top:146px"><span style="color:#808000">#include </span><span style="color:#800080">&lt;rtdevice.h&gt;</span></div>
<div class="mono" style="left:0px;top:162px;width:60px;text-align:right">27</div>
<div class="mono" style="left:77px;top:162px"></div>
<div class="mono" style="left:0px;top:178px;width:60px;text-align:right">28</div>
<div class="mono" style="left:77px;top:178px"><span style="color:#808000">#define</span> LED_PIN <span style="color:#008080">3</span></div>
<div class="mono" style="left:0px;top:194px;width:60px;text-align:right">29</div>
<div class="mono" style="left:77px;top:194px"></div>
<div class="mono" style="left:0px;top:210px;width:60px;text-align:right">30</div>
<div class="mono" style="left:77px;top:210px"><span style="color:#0000ff">int</span> main(<span style="color:#0000ff">void</span>)</div>
<div class="mono" style="left:0px;top:226px;width:60px;text-align:right">31</div>
<div class="mono" style="left:77px;top:226px">{</div>
<div class="mono" style="left:0px;top:242px;width:60px;text-align:right">32</div>
<div class="mono" style="left:77px;top:242px">    <span style="color:#0000ff">return</span> <span style="color:#008080">0</span>;</div>
<div class="mono" style="left:0px;top:258px;width:60px;text-align:right">33</div>
<div class="mono" style="left:77px;top:258px">}</div>
</div>
<div style="position:absolute;left:825px;top:137px;width:17px;height:276px;background:#f0f0f0"></div>
<svg style="position:absolute;left:828px;top:143px" width="9" height="6" viewBox="0 0 9 6"><path d="M1 5L4.5 1.5L8 5" stroke="#606060" stroke-width="2" fill="none"/></svg>
<div style="position:absolute;left:825px;top:225px;width:15px;height:76px;background:#cdcdcd"></div>
<svg style="position:absolute;left:828px;top:400px" width="9" height="6" viewBox="0 0 9 6"><path d="M1 1L4.5 4.5L8 1" stroke="#606060" stroke-width="2" fill="none"/></svg>
<div style="position:absolute;left:250px;top:413px;width:575px;height:17px;background:#f0f0f0"></div>
<div style="position:absolute;left:825px;top:413px;width:17px;height:17px;background:#f0f0f0"></div>
<svg style="position:absolute;left:255px;top:417px" width="6" height="9" viewBox="0 0 6 9"><path d="M5 1L1.5 4.5L5 8" stroke="#606060" stroke-width="2" fill="none"/></svg>
<div style="position:absolute;left:267px;top:413px;width:134px;height:15px;background:#cdcdcd"></div>
<svg style="position:absolute;left:813px;top:417px" width="6" height="9" viewBox="0 0 6 9"><path d="M1 1L4.5 4.5L1 8" stroke="#606060" stroke-width="2" fill="none"/></svg>
<div style="position:absolute;left:1px;top:438px;width:845px;height:18px;background:linear-gradient(#bccbda,#d8e2ec)"></div>
<div class="ui" style="left:5px;top:442px;transform:scaleX(1.03);transform-origin:0 0">Build Output</div>
<svg style="position:absolute;left:814px;top:444px" width="8" height="10" viewBox="0 0 8 10"><path d="M1 0h5v5h1v1H0V5h1z" fill="#000"/><rect x="2.5" y="1" width="1.5" height="4" fill="#fff"/><rect x="3" y="6" width="1" height="3" fill="#000"/></svg>
<div style="position:absolute;left:830px;top:442px;width:12px;height:12px;background:#c94c4c"></div>
<svg style="position:absolute;left:833px;top:445px" width="6" height="6" viewBox="0 0 6 6"><path d="M0.5 0.5L5.5 5.5M5.5 0.5L0.5 5.5" stroke="#fff" stroke-width="1.5"/></svg>
<div style="position:absolute;left:2px;top:459px;width:843px;height:1px;background:#5a5a5a"></div>
<div style="position:absolute;left:3px;top:460px;width:842px;height:1px;background:#a8a8a8"></div>
<div style="position:absolute;left:2px;top:459px;width:1px;height:122px;background:#6d6d6d"></div>
<div style="position:absolute;left:844px;top:461px;width:1px;height:120px;background:#d9d9d9"></div>
<div class="mono" style="left:5px;top:462px">compiling timeslice_sample.c...</div>
<div class="mono" style="left:5px;top:478px">linking...</div>
<div class="mono" style="left:5px;top:494px">Program Size: Code=54872 RO-data=8656 RW-data=764 ZI-data=21812</div>
<div class="mono" style="left:5px;top:510px">After Build - User command #1: fromelf --bin D:\build\rtthread-stm32.axf --output rtthread.bin</div>
<div class="mono" style="left:5px;top:526px">&quot;.\build\rtthread-stm32.axf&quot; - 0 Error(s), 0 Warning(s).</div>
<div class="mono" style="left:5px;top:542px">Build Time Elapsed:  00:00:37</div>
<div style="position:absolute;left:828px;top:461px;width:16px;height:120px;background:#f0f0f0"></div>
<svg style="position:absolute;left:832px;top:467px" width="9" height="6" viewBox="0 0 9 6"><path d="M1 5L4.5 1.5L8 5" stroke="#606060" stroke-width="2" fill="none"/></svg>
<div style="position:absolute;left:828px;top:529px;width:15px;height:17px;background:#cdcdcd"></div>
<svg style="position:absolute;left:832px;top:552px" width="9" height="6" viewBox="0 0 9 6"><path d="M1 1L4.5 4.5L8 1" stroke="#606060" stroke-width="2" fill="none"/></svg>
<div style="position:absolute;left:3px;top:564px;width:825px;height:17px;background:#f0f0f0"></div>
<svg style="position:absolute;left:9px;top:568px" width="6" height="9" viewBox="0 0 6 9"><path d="M5 1L1.5 4.5L5 8" stroke="#b0b0b0" stroke-width="2" fill="none"/></svg>
<svg style="position:absolute;left:816px;top:568px" width="6" height="9" viewBox="0 0 6 9"><path d="M1 1L4.5 4.5L1 8" stroke="#b0b0b0" stroke-width="2" fill="none"/></svg>
<div style="position:absolute;left:1px;top:581px;width:845px;height:20px;background:#f0f0f0"></div>
<div style="position:absolute;left:1px;top:581px;width:845px;height:1px;background:#d6d6d6"></div>
<div style="position:absolute;left:1px;top:582px;width:845px;height:1px;background:#fcfcfc"></div>
<div style="position:absolute;left:753px;top:584px;width:1px;height:17px;background:#d0d0d0"></div>
<div style="position:absolute;left:828px;top:584px;width:1px;height:17px;background:#d0d0d0"></div>
<div class="ui" style="left:758px;top:587px;transform:scaleX(0.97);transform-origin:0 0">Simulation</div>
<div style="position:absolute;left:841px;top:591px;width:2px;height:2px;background:#b8b8b8"></div>
<div style="position:absolute;left:838px;top:594px;width:2px;height:2px;background:#b8b8b8"></div>
<div style="position:absolute;left:841px;top:594px;width:2px;height:2px;background:#b8b8b8"></div>
<div style="position:absolute;left:835px;top:597px;width:2px;height:2px;background:#b8b8b8"></div>
<div style="position:absolute;left:838px;top:597px;width:2px;height:2px;background:#b8b8b8"></div>
<div style="position:absolute;left:841px;top:597px;width:2px;height:2px;background:#b8b8b8"></div>
<svg style="position:absolute;left:17px;top:60px" width="13" height="15" viewBox="0 0 13 15"><defs><linearGradient id="nd" x1="0" y1="0" x2="1" y2="1"><stop offset="0" stop-color="#f4f6fc"/><stop offset="1" stop-color="#cdd8ee"/></linearGradient></defs><path d="M0.5 0.5H9L12.5 4V14.5H0.5Z" fill="url(#nd)" stroke="#8f8f8f"/><path d="M9 0.5V4H12.5" fill="#fff" stroke="#8f8f8f"/></svg>
<svg style="position:absolute;left:39px;top:60px" width="17" height="15" viewBox="0 0 17 15"><path d="M0.5 4.5H5L6.5 6H12.5V14.5H0.5Z" fill="#f7df8a" stroke="#8a7040"/><path d="M3.5 8.5H16.5L13 14.5H0.5Z" fill="#f2b62c" stroke="#8a7040"/><path d="M9 3.5Q12 0 15 3" stroke="#2f5fa0" stroke-width="1.4" fill="none"/><path d="M13 2.5L16.5 2L16 5.5Z" fill="#2f5fa0"/></svg>
<svg style="position:absolute;left:64px;top:61px" width="14" height="14" viewBox="0 0 14 14"><defs><linearGradient id="sv" x1="0" y1="0" x2="1" y2="1"><stop offset="0" stop-color="#8080dc"/><stop offset="1" stop-color="#3a3aa8"/></linearGradient></defs><rect x="0.5" y="0.5" width="13" height="13" fill="url(#sv)" stroke="#3838a0"/><rect x="3" y="1" width="8" height="6" fill="#f4f6fc"/><rect x="9" y="4" width="2" height="3" fill="#c8d0e8"/><rect x="4" y="9" width="6" height="4" fill="#e8e8e8"/><rect x="4" y="9" width="2.5" height="2.5" fill="#000"/></svg>
<svg style="position:absolute;left:88px;top:61px" width="14" height="14" viewBox="0 0 14 14"><rect x="4.5" y="0.5" width="9" height="9" fill="url(#sv)" stroke="#3838a0"/><rect x="2.5" y="2.5" width="9" height="9" fill="url(#sv)" stroke="#3838a0"/><rect x="0.5" y="4.5" width="9" height="9" fill="url(#sv)" stroke="#3838a0"/><rect x="6" y="1.5" width="5" height="1" fill="#fff"/><rect x="4" y="3.5" width="5" height="1" fill="#fff"/><rect x="2.5" y="5.5" width="5" height="3" fill="#f0f0f8"/><rect x="3" y="10" width="4" height="3" fill="#303030"/><rect x="5" y="11" width="1.5" height="1.5" fill="#e0e0e0"/></svg>
<svg style="position:absolute;left:121px;top:60px" width="11" height="15" viewBox="0 0 11 15"><path d="M2.5 0.5L6 9M8.5 0.5L5 9" stroke="#a8a8a8" stroke-width="1.6"/><circle cx="3" cy="11.5" r="2.3" fill="none" stroke="#a8a8a8" stroke-width="1.5"/><circle cx="8" cy="11.5" r="2.3" fill="none" stroke="#a8a8a8" stroke-width="1.5"/></svg>
<svg style="position:absolute;left:144px;top:61px" width="15" height="14" viewBox="0 0 15 14"><path d="M0.5 0.5H6L8.5 3V10.5H0.5Z" fill="#f2f2f2" stroke="#b0b0b0"/><path d="M5.5 3.5H11L14.5 7V13.5H5.5Z" fill="#f6f6f6" stroke="#b0b0b0"/><path d="M7 7h5M7 9h6M7 11h6M2 4h4M2 6h4M2 8h3" stroke="#c0c0c0"/></svg>
<svg style="position:absolute;left:167px;top:61px" width="17" height="14" viewBox="0 0 17 14"><rect x="0.5" y="2.5" width="11" height="11" fill="#f0b81c" stroke="#806020"/><rect x="3.5" y="0.5" width="5" height="3" fill="#e8d8a0" stroke="#806020"/><path d="M6.5 6.5H13L15.5 9V13.5H6.5Z" fill="#dce6f4" stroke="#3a5080"/><path d="M8 9h4M8 11h6" stroke="#5070a0"/></svg>
<svg style="position:absolute;left:201px;top:61px" width="12" height="13" viewBox="0 0 12 13"><path d="M3 4Q7 0 10 4Q12 8 6 12" stroke="#b8b8b8" stroke-width="2.2" fill="none"/><path d="M0 2L5 1L4 7Z" fill="#b8b8b8"/></svg>
<svg style="position:absolute;left:225px;top:61px" width="12" height="13" viewBox="0 0 12 13"><path d="M9 4Q5 0 2 4Q0 8 6 12" stroke="#b8b8b8" stroke-width="2.2" fill="none"/><path d="M12 2L7 1L8 7Z" fill="#b8b8b8"/></svg>
<svg style="position:absolute;left:256px;top:62px" width="15" height="11" viewBox="0 0 15 11"><path d="M0.5 5.5L6 0.5V3H14.5V8H6V10.5Z" fill="#4a86e0" stroke="#3a6ed0"/></svg>
<svg style="position:absolute;left:280px;top:62px" width="15" height="11" viewBox="0 0 15 11"><path d="M14.5 5.5L9 0.5V3H0.5V8H9V10.5Z" fill="#c8c8c8" stroke="#c0c0c0"/></svg>
<svg style="position:absolute;left:312px;top:61px" width="14" height="14" viewBox="0 0 14 14"><rect x="0" y="1" width="2" height="13" fill="#707070"/><path d="M2 1Q5 0 7 2Q10 3 13 2V8Q10 10 7 8Q5 6 2 8Z" fill="#3cc0dc" stroke="#28a0c0" stroke-width="0.8"/></svg>
<svg style="position:absolute;left:336px;top:61px" width="16" height="15" viewBox="0 0 16 15"><rect x="0" y="1" width="2" height="13" fill="#c0c0c0"/><path d="M2 1Q5 0 7 2Q10 3 12 2V8Q10 10 7 8Q5 6 2 8Z" fill="#c8c8c8" stroke="#b8b8b8" stroke-width="0.8"/><path d="M5 11.5H14M5 11.5L8 9M5 11.5L8 14" stroke="#a8a8a8" stroke-width="1.4" fill="none"/></svg>
<svg style="position:absolute;left:360px;top:61px" width="16" height="15" viewBox="0 0 16 15"><rect x="0" y="1" width="2" height="13" fill="#c0c0c0"/><path d="M2 1Q5 0 7 2Q10 3 12 2V8Q10 10 7 8Q5 6 2 8Z" fill="#c8c8c8" stroke="#b8b8b8" stroke-width="0.8"/><path d="M4 11.5H13M13 11.5L10 9M13 11.5L10 14" stroke="#a8a8a8" stroke-width="1.4" fill="none"/></svg>
<svg style="position:absolute;left:384px;top:61px" width="16" height="15" viewBox="0 0 16 15"><rect x="0" y="1" width="2" height="13" fill="#c0c0c0"/><path d="M2 1Q5 0 7 2Q10 3 12 2V8Q10 10 7 8Q5 6 2 8Z" fill="#c8c8c8" stroke="#b8b8b8" stroke-width="0.8"/><path d="M9 9L14 14M14 9L9 14" stroke="#a8a8a8" stroke-width="1.4"/></svg>
<svg style="position:absolute;left:415px;top:60px" width="17" height="15" viewBox="0 0 17 15"><rect x="7" y="0" width="1" height="1" fill="#707070"/><rect x="2" y="2" width="4" height="1" fill="#707070"/><rect x="7" y="2" width="9" height="1" fill="#707070"/><rect x="7" y="4" width="9" height="2" fill="#606060"/><rect x="7" y="7" width="6" height="2" fill="#606060"/><rect x="2" y="10" width="4" height="1" fill="#707070"/><rect x="7" y="10" width="9" height="1" fill="#707070"/><rect x="2" y="12" width="4" height="1" fill="#707070"/><rect x="7" y="12" width="2" height="1" fill="#707070"/><rect x="7" y="14" width="1" height="1" fill="#707070"/><path d="M0.5 4.5L4.5 6.5L0.5 8.5M0 6.5H4" stroke="#b8b8b8" fill="none"/></svg>
<svg style="position:absolute;left:439px;top:60px" width="17" height="15" viewBox="0 0 17 15"><rect x="7" y="0" width="1" height="1" fill="#707070"/><rect x="2" y="2" width="4" height="1" fill="#707070"/><rect x="7" y="2" width="9" height="1" fill="#707070"/><rect x="7" y="4" width="9" height="2" fill="#606060"/><rect x="7" y="7" width="6" height="2" fill="#606060"/><rect x="2" y="10" width="4" height="1" fill="#707070"/><rect x="7" y="10" width="9" height="1" fill="#707070"/><rect x="2" y="12" width="4" height="1" fill="#707070"/><rect x="7" y="12" width="2" height="1" fill="#707070"/><rect x="7" y="14" width="1" height="1" fill="#707070"/><path d="M4.5 4.5L0.5 6.5L4.5 8.5M1 6.5H5" stroke="#b8b8b8" fill="none"/></svg>
<svg style="position:absolute;left:463px;top:61px" width="16" height="14" viewBox="0 0 16 14"><path d="M1 13L5 1.5M5 13L9 1.5" stroke="#8c8c8c" stroke-width="1.7"/><path d="M11 2.5H15M10 6.5H15M9.5 10.5H15" stroke="#909090" stroke-width="1.1"/></svg>
<svg style="position:absolute;left:487px;top:61px" width="17" height="15" viewBox="0 0 17 15"><path d="M1 13L5 1.5M5 13L9 1.5" stroke="#8c8c8c" stroke-width="1.7"/><path d="M11 2.5H15M10 5.5H15" stroke="#909090" stroke-width="1.1"/><path d="M10 8.5L14.5 13.5M14.5 8.5L10 13.5" stroke="#8c8c8c" stroke-width="1.6"/></svg>
<svg style="position:absolute;left:519px;top:61px" width="17" height="14" viewBox="0 0 17 14"><defs><linearGradient id="ff" x1="0" y1="0" x2="0" y2="1"><stop offset="0" stop-color="#fbe08a"/><stop offset="1" stop-color="#e8a818"/></linearGradient></defs><path d="M0.5 2.5H5L6.5 4H8V12.5H0.5Z" fill="#f6d878" stroke="#7a6030"/><path d="M3 7L0.5 12.5H12.5L15 7Z" fill="url(#ff)" stroke="#7a6030"/><circle cx="9" cy="6" r="2.3" fill="#fff" stroke="#202020" stroke-width="1.3"/><circle cx="14" cy="6" r="2.3" fill="#fff" stroke="#202020" stroke-width="1.3"/><rect x="7.5" y="0.5" width="2.5" height="3.5" fill="#303030"/><rect x="13" y="0.5" width="2.5" height="3.5" fill="#303030"/><rect x="10" y="2" width="3" height="2" fill="#303030"/></svg>
<svg style="position:absolute;left:694px;top:60px" width="16" height="16" viewBox="0 0 16 16"><path d="M0.5 0.5H8L11.5 4V14.5H0.5Z" fill="#f4f8ff" stroke="#7890b8"/><path d="M2 3.5h5M2 5.5h7M2 7.5h6M2 9.5h4M2 11.5h4" stroke="#3a70d8"/><g transform="translate(6,7) scale(0.8)"><path d="M1 0.5h3v2h2v-2h3v4l1 3a2.6 2.6 0 0 1-5 1v-1h-1v1a2.6 2.6 0 0 1-5-1l1-3z" fill="#383838"/><circle cx="2.6" cy="7.3" r="1.4" fill="#b8b8b8"/><circle cx="8.4" cy="7.3" r="1.4" fill="#b8b8b8"/><rect x="4" y="3" width="3" height="1.5" fill="#909090"/></g></svg>
<svg style="position:absolute;left:717px;top:60px" width="17" height="15" viewBox="0 0 17 15"><path d="M3 5H7V10H10L5 15L0 10H3Z" fill="#4a88e8" stroke="#3a70d0" stroke-width="0.6"/><g transform="translate(7,1) scale(0.8)"><path d="M1 0.5h3v2h2v-2h3v4l1 3a2.6 2.6 0 0 1-5 1v-1h-1v1a2.6 2.6 0 0 1-5-1l1-3z" fill="#383838"/><circle cx="2.6" cy="7.3" r="1.4" fill="#b8b8b8"/><circle cx="8.4" cy="7.3" r="1.4" fill="#b8b8b8"/><rect x="4" y="3" width="3" height="1.5" fill="#909090"/></g></svg>
<svg style="position:absolute;left:750px;top:60px" width="16" height="15" viewBox="0 0 16 15"><circle cx="6.5" cy="6.5" r="5.6" fill="#fff" stroke="#202020" stroke-width="1.6"/><path d="M10.5 10.5L14.5 14" stroke="#1a3a98" stroke-width="2.4"/><path d="M8.5 1.5V10.5" stroke="#f01010" stroke-width="2.2"/><circle cx="5.6" cy="7.6" r="2.3" fill="none" stroke="#f01010" stroke-width="2"/></svg>
<svg style="position:absolute;left:773px;top:67px" width="5" height="3" viewBox="0 0 5 3"><path d="M0 0H5L2.5 3Z" fill="#000"/></svg>
<svg style="position:absolute;left:796px;top:62px" width="12" height="12" viewBox="0 0 12 12"><defs><radialGradient id="rc" cx="0.4" cy="0.35" r="0.7"><stop offset="0" stop-color="#e89090"/><stop offset="0.5" stop-color="#d03030"/><stop offset="1" stop-color="#a01010"/></radialGradient></defs><circle cx="6" cy="6" r="5.6" fill="url(#rc)"/></svg>
<svg style="position:absolute;left:820px;top:62px" width="12" height="12" viewBox="0 0 12 12"><circle cx="6" cy="6" r="5.2" fill="#f2f4f8" stroke="#b8b8b8" stroke-width="1.1"/></svg>
<svg style="position:absolute;left:842px;top:66px" width="3" height="8" viewBox="0 0 3 8"><path d="M2 0.5V7.5M1 3V5" stroke="#d83030" stroke-width="1" fill="none"/></svg>
<svg style="position:absolute;left:15px;top:87px" width="17" height="16" viewBox="0 0 17 16"><path d="M0.5 11.5L8 8L15.5 11.5L8 15Z" fill="#fff" stroke="#1a2040"/><path d="M0.5 9.5L8 6L15.5 9.5L8 13Z" fill="#fff" stroke="#1a2040"/><path d="M0.5 7.5L7 4.5L15.5 7.5L8 11Z" fill="#fff" stroke="#1a2040"/><path d="M7 0.5H10V4.5H12L8.5 8L5 4.5H7Z" fill="#3a86f0"/></svg>
<svg style="position:absolute;left:40px;top:88px" width="16" height="15" viewBox="0 0 16 15"><path d="M0.5 5V13.5H15.5V5" fill="none" stroke="#243460" stroke-width="1"/><rect x="1" y="1" width="1" height="1" fill="#303850"/><rect x="4" y="1" width="1" height="1" fill="#303850"/><rect x="7" y="1" width="1" height="1" fill="#303850"/><rect x="10" y="1" width="1" height="1" fill="#303850"/><rect x="13" y="1" width="1" height="1" fill="#303850"/><rect x="2" y="3" width="1" height="1" fill="#303850"/><rect x="5" y="3" width="1" height="1" fill="#303850"/><rect x="8" y="3" width="1" height="1" fill="#303850"/><rect x="11" y="3" width="1" height="1" fill="#303850"/><rect x="14" y="3" width="1" height="1" fill="#303850"/> <rect x="2" y="9" width="1" height="1" fill="#303850"/><rect x="4" y="9" width="1" height="1" fill="#303850"/><rect x="6" y="9" width="1" height="1" fill="#303850"/><rect x="8" y="9" width="1" height="1" fill="#303850"/><rect x="10" y="9" width="1" height="1" fill="#303850"/><rect x="12" y="9" width="1" height="1" fill="#303850"/><rect x="14" y="9" width="1" height="1" fill="#303850"/><rect x="2" y="11" width="1" height="1" fill="#303850"/><rect x="4" y="11" width="1" height="1" fill="#303850"/><rect x="6" y="11" width="1" height="1" fill="#303850"/><rect x="8" y="11" width="1" height="1" fill="#303850"/><rect x="10" y="11" width="1" height="1" fill="#303850"/><rect x="12" y="11" width="1" height="1" fill="#303850"/><rect x="14" y="11" width="1" height="1" fill="#303850"/><path d="M6.5 4H9.5V6.5H11.5L8 10L4.5 6.5H6.5Z" fill="#3a86f0"/></svg>
<svg style="position:absolute;left:64px;top:88px" width="16" height="15" viewBox="0 0 16 15"><path d="M0.5 5V13.5H15.5V5" fill="none" stroke="#243460" stroke-width="1"/><rect x="1" y="1" width="1" height="1" fill="#303850"/><rect x="4" y="1" width="1" height="1" fill="#303850"/><rect x="7" y="1" width="1" height="1" fill="#303850"/><rect x="10" y="1" width="1" height="1" fill="#303850"/><rect x="13" y="1" width="1" height="1" fill="#303850"/><rect x="2" y="3" width="1" height="1" fill="#303850"/><rect x="5" y="3" width="1" height="1" fill="#303850"/><rect x="8" y="3" width="1" height="1" fill="#303850"/><rect x="11" y="3" width="1" height="1" fill="#303850"/><rect x="14" y="3" width="1" height="1" fill="#303850"/> <rect x="2" y="9" width="1" height="1" fill="#303850"/><rect x="4" y="9" width="1" height="1" fill="#303850"/><rect x="6" y="9" width="1" height="1" fill="#303850"/><rect x="8" y="9" width="1" height="1" fill="#303850"/><rect x="10" y="9" width="1" height="1" fill="#303850"/><rect x="12" y="9" width="1" height="1" fill="#303850"/><rect x="14" y="9" width="1" height="1" fill="#303850"/><rect x="2" y="11" width="1" height="1" fill="#303850"/><rect x="4" y="11" width="1" height="1" fill="#303850"/><rect x="6" y="11" width="1" height="1" fill="#303850"/><rect x="8" y="11" width="1" height="1" fill="#303850"/><rect x="10" y="11" width="1" height="1" fill="#303850"/><rect x="12" y="11" width="1" height="1" fill="#303850"/><rect x="14" y="11" width="1" height="1" fill="#303850"/><path d="M3 4H5.5V6.5H7.5L4.2 9.8L1 6.5H3ZM10.5 4H13V6.5H15L11.7 9.8L8.5 6.5H10.5Z" fill="#3a86f0"/></svg>
<svg style="position:absolute;left:88px;top:87px" width="17" height="16" viewBox="0 0 17 16"><path d="M1 12L8 8L16 12L9 16Z" fill="#e8e830" stroke="#707000"/><path d="M1 10L8 6L16 10L9 14Z" fill="#40c040" stroke="#206020"/><path d="M1 8L8 4L16 8L9 12Z" fill="#f0f0f0" stroke="#404040"/><path d="M4 5L8 3L12 5" stroke="#3a80e8" fill="none" stroke-width="1.2"/><path d="M6.5 0H9V3H11L7.8 6L4.5 3H6.5Z" fill="#3a80e8"/></svg>
<svg style="position:absolute;left:110px;top:95px" width="6" height="4" viewBox="0 0 6 4"><path d="M0 0H6L3 3.5Z" fill="#000"/></svg>
<svg style="position:absolute;left:124px;top:88px" width="17" height="16" viewBox="0 0 17 16"><path d="M0.5 6V13.5H11" fill="none" stroke="#a8a8a8"/><path d="M15.5 6V9" stroke="#a8a8a8"/><rect x="1" y="1" width="1" height="1" fill="#b0b0b0"/><rect x="3" y="1" width="1" height="1" fill="#b0b0b0"/><rect x="5" y="1" width="1" height="1" fill="#b0b0b0"/><rect x="7" y="1" width="1" height="1" fill="#b0b0b0"/><rect x="9" y="1" width="1" height="1" fill="#b0b0b0"/><rect x="11" y="1" width="1" height="1" fill="#b0b0b0"/><rect x="13" y="1" width="1" height="1" fill="#b0b0b0"/><rect x="15" y="1" width="1" height="1" fill="#b0b0b0"/><rect x="2" y="3" width="1" height="1" fill="#b0b0b0"/><rect x="4" y="3" width="1" height="1" fill="#b0b0b0"/><rect x="6" y="3" width="1" height="1" fill="#b0b0b0"/><rect x="8" y="3" width="1" height="1" fill="#b0b0b0"/><rect x="10" y="3" width="1" height="1" fill="#b0b0b0"/><rect x="12" y="3" width="1" height="1" fill="#b0b0b0"/><rect x="14" y="3" width="1" height="1" fill="#b0b0b0"/><rect x="1" y="5" width="1" height="1" fill="#b0b0b0"/><rect x="3" y="5" width="1" height="1" fill="#b0b0b0"/><rect x="5" y="5" width="1" height="1" fill="#b0b0b0"/><rect x="7" y="5" width="1" height="1" fill="#b0b0b0"/><rect x="9" y="5" width="1" height="1" fill="#b0b0b0"/><rect x="11" y="5" width="1" height="1" fill="#b0b0b0"/><rect x="13" y="5" width="1" height="1" fill="#b0b0b0"/><rect x="15" y="5" width="1" height="1" fill="#b0b0b0"/><rect x="3" y="9" width="1" height="1" fill="#b0b0b0"/><rect x="5" y="9" width="1" height="1" fill="#b0b0b0"/><rect x="7" y="9" width="1" height="1" fill="#b0b0b0"/><rect x="9" y="9" width="1" height="1" fill="#b0b0b0"/><rect x="11" y="9" width="1" height="1" fill="#b0b0b0"/><rect x="3" y="11" width="1" height="1" fill="#b0b0b0"/><rect x="5" y="11" width="1" height="1" fill="#b0b0b0"/><rect x="7" y="11" width="1" height="1" fill="#b0b0b0"/><rect x="9" y="11" width="1" height="1" fill="#b0b0b0"/><rect x="11" y="11" width="1" height="1" fill="#b0b0b0"/><path d="M10 10L15 15M15 10L10 15" stroke="#a0a0a0" stroke-width="2"/></svg>
<svg style="position:absolute;left:156px;top:88px" width="17" height="16" viewBox="0 0 17 16"><text x="8.5" y="6" font-family="Liberation Mono" font-size="7" font-weight="bold" text-anchor="middle" fill="#000" letter-spacing="0.3">LOAD</text><path d="M2 7H5V11H7.5L3.5 15.5L-0.5 11H2ZM12 7H15V11H17.5L13.5 15.5L9.5 11H12Z" fill="#2a60d8"/><circle cx="8.5" cy="9.5" r="2.5" fill="#f0f020" stroke="#c0c000" stroke-width="0.6"/></svg>
<svg style="position:absolute;left:338px;top:88px" width="17" height="15" viewBox="0 0 17 15"><path d="M9 6L15 13" stroke="#202020" stroke-width="2"/><path d="M9 1v2M11 2l-1 1M14 1h1M15 4h1M12 5h1" stroke="#e04040"/><path d="M5 6V9M5 9L2 12M5 9L8 12M2 12V14M8 12V14" stroke="#2050c0" fill="none"/><rect x="3.5" y="4.5" width="3" height="3" fill="#3a7ae0"/><rect x="0.5" y="11.5" width="3" height="3" fill="#3a7ae0"/><rect x="6.5" y="11.5" width="3" height="3" fill="#3a7ae0"/><rect x="3.5" y="8" width="3" height="2" fill="#2050c0"/></svg>
<svg style="position:absolute;left:371px;top:88px" width="15" height="15" viewBox="0 0 15 15"><rect x="4.5" y="0.5" width="6" height="6" fill="#e02020" stroke="#303060"/><rect x="0.5" y="7.5" width="7" height="7" fill="#20b020" stroke="#303060"/><rect x="7.5" y="7.5" width="7" height="7" fill="#e0e0e0" stroke="#303060"/><rect x="2" y="9" width="4" height="4" fill="#60e060"/></svg>
<svg style="position:absolute;left:394px;top:88px" width="16" height="15" viewBox="0 0 16 15"><rect x="0.5" y="0.5" width="9" height="6" fill="#f6f6f6" stroke="#a8a8a8"/><rect x="3.5" y="4.5" width="9" height="6" fill="#f6f6f6" stroke="#a8a8a8"/><rect x="6.5" y="8.5" width="9" height="6" fill="#f6f6f6" stroke="#a8a8a8"/><path d="M1 2h8M4 6h8M7 10h8" stroke="#b8b8b8"/></svg>
<svg style="position:absolute;left:419px;top:89px" width="14" height="14" viewBox="0 0 14 14"><path d="M7 0L14 7L7 14L0 7Z" fill="#20e020" stroke="#106010"/><circle cx="7" cy="4" r="1" fill="#000"/><circle cx="4" cy="7" r="1" fill="#000"/><circle cx="10" cy="7" r="1" fill="#000"/><circle cx="7" cy="10" r="1" fill="#000"/></svg>
<svg style="position:absolute;left:442px;top:88px" width="16" height="15" viewBox="0 0 16 15"><path d="M1 7L5 2L9 7Z" fill="#20e020" stroke="#106010"/><path d="M7 7L11 3L15 7Z" fill="#40e8e8" stroke="#108080"/><path d="M0.5 7.5H15.5L10 11V14.5H6V11Z" fill="#d8f4fc" stroke="#808890"/></svg>
<svg style="position:absolute;left:465px;top:88px" width="17" height="15" viewBox="0 0 17 15"><path d="M0.5 7.5V14.5H16.5V7.5" fill="#fff" stroke="#000"/><path d="M0.5 7.5L8.5 13L16.5 7.5" fill="none" stroke="#000"/><path d="M5 0L9 4L5 8L1 4Z" fill="#f0f020" stroke="#808000"/><path d="M12 1L16 5L12 9L8 5Z" fill="#40e8e8" stroke="#108080"/><path d="M7 4L11 8L7 12L3 8Z" fill="#20e020" stroke="#106010"/></svg>
<div style="position:absolute;left:0px;top:0px;width:847px;height:1px;background:#1a7fd6"></div>
<div style="position:absolute;left:0px;top:0px;width:1px;height:602px;background:#1a7fd6"></div>
<div style="position:absolute;left:846px;top:0px;width:1px;height:602px;background:#1a7fd6"></div>
<div style="position:absolute;left:0px;top:601px;width:847px;height:1px;background:#1a7fd6"></div></body></html>
